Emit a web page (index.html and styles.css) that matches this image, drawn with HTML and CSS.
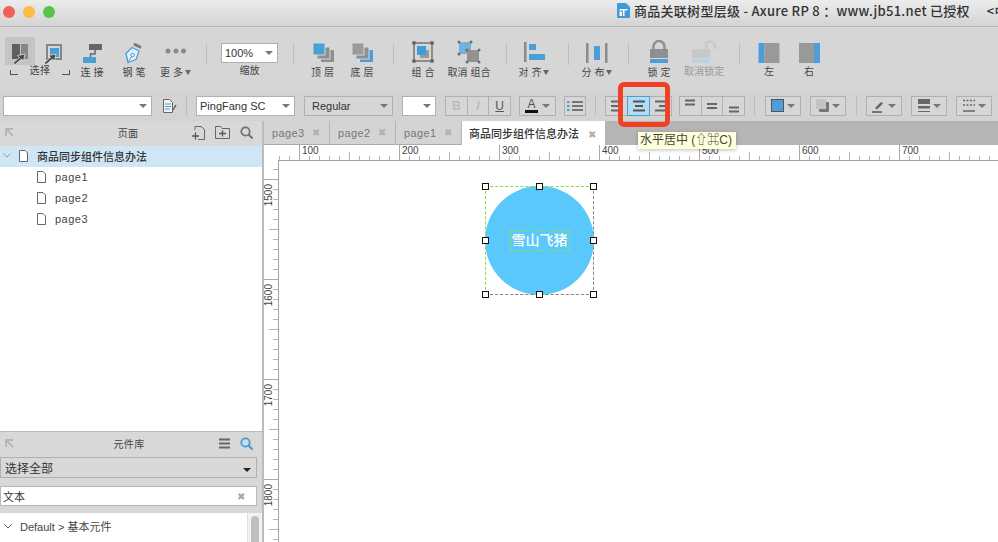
FILE: index.html
```html
<!DOCTYPE html>
<html lang="zh-CN">
<head>
    <meta charset="UTF-8">
    <title>商品关联树型层级 - Axure RP 8</title>
    <link rel="stylesheet" href="styles.css">
</head>
<body>
    <!-- 标题栏 -->
    <header class="titlebar">
        <div class="lights">
            <span class="light light-red"></span>
            <span class="light light-yellow"></span>
            <span class="light light-green"></span>
        </div>
        <div class="title">
            <svg class="title-icon" width="13" height="15" viewBox="0 0 13 15"><path d="M1 0h8l4 4v10a1 1 0 0 1-1 1H1a1 1 0 0 1-1-1V1a1 1 0 0 1 1-1z" fill="#3f9bd6"/><path d="M2.500 6h8v1.500h-3v5.500h-1.500V7.500H2.500z" fill="#fff"/><path d="M2.500 8.500h2.500v4.500H2.500z" fill="#fff"/></svg>
            <span>商品关联树型层级 - Axure RP 8 ：www.jb51.net 已授权</span>
            <span class="title-extra">&lt;中</span>
        </div>
    </header>

    <!-- 主工具栏 -->
    <div class="toolbar">
        <div class="tool-select">
            <div class="select-icons">
                <div class="icon-box active">
                    <svg width="30" height="28" viewBox="0 0 30 28"><rect x="7" y="7" width="8" height="15" fill="#5f5f5f"/><rect x="16" y="7" width="7" height="15" fill="#868686"/><path d="M20 17l-7.500 1.500 2 2L8 26l2 1.500 6.500-5.500 2 2z" fill="#4a4a4a" stroke="#eee" stroke-width=".7"/></svg>
                </div>
                <div class="icon-box">
                    <svg width="30" height="28" viewBox="0 0 30 28"><rect x="8" y="8" width="14" height="14" fill="none" stroke="#858585" stroke-width="2"/><rect x="11" y="11" width="9" height="9" fill="#4a9fd8"/><path d="M17 17l-7.500 1.500 2 2L5 26l2 1.500 6.500-5.500 2 2z" fill="#4a4a4a" stroke="#eee" stroke-width=".7"/></svg>
                </div>
            </div>
            <div class="select-label">
                <span class="corner corner-left"></span>
                <span>选择</span>
                <span class="corner corner-right"></span>
            </div>
        </div>

        <div class="tool">
            <svg width="30" height="28" viewBox="0 0 30 28"><rect x="12" y="7" width="13" height="6" fill="#666"/><path d="M18 13v4h-4.500v3" fill="none" stroke="#666" stroke-width="1.500"/><rect x="6" y="20" width="13" height="6" fill="#4a9fd8"/></svg>
            <span class="tool-label">连 接</span>
        </div>
        <div class="tool">
            <svg width="30" height="28" viewBox="0 0 30 28"><path d="M9 25.500l-2-9 6-6 7 3.500-3 8.500z" fill="#e8f2f9" stroke="#4a9fd8" stroke-width="1.300"/><circle cx="13.500" cy="18" r="1.800" fill="none" stroke="#4a9fd8"/><path d="M9 25.500l3.500-6" stroke="#4a9fd8"/><path d="M15 7l7 3.500" stroke="#777" stroke-width="3"/></svg>
            <span class="tool-label">钢 笔</span>
        </div>
        <div class="tool">
            <svg width="30" height="28" viewBox="0 0 30 28"><circle cx="7" cy="14" r="2.500" fill="#8a8a8a"/><circle cx="15" cy="14" r="2.500" fill="#8a8a8a"/><circle cx="22.500" cy="14" r="2.500" fill="#8a8a8a"/></svg>
            <span class="tool-label">更 多<i class="mini-caret"></i></span>
        </div>
        <span class="sep"></span>
        <div class="tool">
            <div class="zoom-box combo">
                <span>100%</span>
                <i class="caret"></i>
            </div>
            <span class="tool-label zoom-label">缩放</span>
        </div>
        <span class="sep"></span>
        <div class="tool">
            <svg width="30" height="28" viewBox="0 0 30 28"><rect x="13" y="13" width="13" height="12" fill="#8f8f8f"/><rect x="9" y="10" width="13" height="12" fill="#8f8f8f" stroke="#d6d6d6"/><rect x="5" y="6" width="12" height="12" fill="#4a9fd8" stroke="#d6d6d6"/></svg>
            <span class="tool-label">顶 层</span>
        </div>
        <div class="tool">
            <svg width="30" height="28" viewBox="0 0 30 28"><rect x="13" y="13" width="13" height="12" fill="#4a9fd8"/><rect x="9" y="10" width="13" height="12" fill="#8f8f8f" stroke="#d6d6d6"/><rect x="5" y="6" width="12" height="12" fill="#9a9a9a" stroke="#d6d6d6"/></svg>
            <span class="tool-label">底 层</span>
        </div>
        <span class="sep"></span>
        <div class="tool">
            <svg width="30" height="28" viewBox="0 0 30 28"><rect x="6" y="6" width="18" height="18" fill="none" stroke="#666" stroke-width="1.300"/><g fill="#666"><circle cx="6" cy="6" r="2"/><circle cx="24" cy="6" r="2"/><circle cx="6" cy="24" r="2"/><circle cx="24" cy="24" r="2"/></g><rect x="12" y="13" width="9" height="8" fill="#9a9a9a"/><rect x="9" y="9" width="9" height="9" fill="#3f9bd9"/></svg>
            <span class="tool-label">组 合</span>
        </div>
        <div class="tool">
            <svg width="30" height="28" viewBox="0 0 30 28"><rect x="5" y="5" width="12" height="12" fill="#74b2dc"/><rect x="13" y="13" width="12" height="12" fill="#929292"/><g fill="#6f6f6f"><circle cx="5" cy="5" r="1.500"/><circle cx="17" cy="5" r="1.500"/><circle cx="5" cy="17" r="1.500"/><circle cx="13" cy="13" r="1.500"/><circle cx="25" cy="13" r="1.500"/><circle cx="13" cy="25" r="1.500"/><circle cx="25" cy="25" r="1.500"/></g></svg>
            <span class="tool-label">取消 组合</span>
        </div>
        <span class="sep"></span>
        <div class="tool">
            <svg width="30" height="28" viewBox="0 0 30 28"><rect x="5" y="5" width="2.500" height="20" fill="#8a8a8a"/><rect x="10" y="7" width="7" height="6" fill="#4a9fd8"/><rect x="10" y="17" width="16" height="6" fill="#4a9fd8"/></svg>
            <span class="tool-label">对 齐<i class="mini-caret"></i></span>
        </div>
        <span class="sep"></span>
        <div class="tool">
            <svg width="30" height="28" viewBox="0 0 30 28"><rect x="4" y="6" width="2.500" height="20" fill="#8a8a8a"/><rect x="23" y="6" width="2.500" height="20" fill="#8a8a8a"/><rect x="12" y="9" width="6" height="14" fill="#4a9fd8"/></svg>
            <span class="tool-label">分 布<i class="mini-caret"></i></span>
        </div>
        <span class="sep"></span>
        <div class="tool">
            <svg width="30" height="28" viewBox="0 0 30 28"><path d="M9.500 12V9.500a5.500 5.500 0 0 1 11 0V12" fill="none" stroke="#8f8f8f" stroke-width="2.500"/><rect x="6" y="12" width="18" height="9" fill="#8f8f8f"/><rect x="6" y="22" width="18" height="4" fill="#4a9fd8"/></svg>
            <span class="tool-label">锁 定</span>
        </div>
        <div class="tool tool-off">
            <svg width="30" height="28" viewBox="0 0 30 28"><path d="M17 12V9a4.500 4.500 0 0 1 9 0v3" fill="none" stroke="#c8c8c8" stroke-width="2.500"/><rect x="3" y="12" width="18" height="9" fill="#c8c8c8"/><rect x="3" y="22" width="18" height="4" fill="#b9d3e3"/></svg>
            <span class="tool-label">取消锁定</span>
        </div>
        <span class="sep"></span>
        <div class="tool tool-side">
            <svg width="30" height="28" viewBox="0 0 30 28"><rect x="4.500" y="6" width="6" height="20" fill="#4a9fd8"/><rect x="10.500" y="6" width="15" height="20" fill="#999"/></svg>
            <span class="tool-label">左</span>
        </div>
        <div class="tool tool-side">
            <svg width="30" height="28" viewBox="0 0 30 28"><rect x="5" y="6" width="15" height="20" fill="#999"/><rect x="20" y="6" width="6" height="20" fill="#4a9fd8"/></svg>
            <span class="tool-label">右</span>
        </div>
    </div>

    <!-- 格式栏 -->
    <div class="formatbar">
        <div class="combo fmt-style"><span></span><i class="caret"></i></div>
        <svg class="fmt-doc" width="16" height="16" viewBox="0 0 16 16"><path d="M2.500 1.500h6l3 3v10h-9z" fill="#f2f2f2" stroke="#666"/><path d="M4 6h6M4 8.500h6M4 11h5" stroke="#4a9fd8"/><path d="M12 12l3-5" stroke="#555" stroke-width="1.300"/></svg>
        <span class="sep-small"></span>
        <div class="combo fmt-font"><span>PingFang SC</span><i class="caret"></i></div>
        <div class="combo combo-gray fmt-weight"><span>Regular</span><i class="caret"></i></div>
        <div class="combo fmt-size"><span></span><i class="caret"></i></div>
        <div class="btn-group fmt-biu">
            <span class="fmt-btn off bold">B</span>
            <span class="fmt-btn off ital">I</span>
            <span class="fmt-btn under">U</span>
        </div>
        <div class="fmt-drop fmt-color">
            <span class="letter-a">A</span>
            <i class="caret"></i>
        </div>
        <div class="fmt-btn single fmt-list">
            <svg width="16" height="12" viewBox="0 0 16 12"><path d="M0 2h2.500M0 6h2.500M0 10h2.500" stroke="#4a9fd8" stroke-width="2"/><path d="M5 2h11M5 6h11M5 10h11" stroke="#555" stroke-width="1.500"/></svg>
        </div>
        <span class="sep-small"></span>
        <div class="btn-group fmt-align">
            <span class="fmt-btn"><svg width="14" height="14" viewBox="0 0 14 14"><path d="M1 2.500h12M1 7h8M1 11.500h12" stroke="#666" stroke-width="1.800"/></svg></span>
            <span class="fmt-btn on"><svg width="14" height="14" viewBox="0 0 14 14"><path d="M1 2.500h12M3 7h8M1 11.500h12" stroke="#555" stroke-width="1.800"/></svg></span>
            <span class="fmt-btn"><svg width="14" height="14" viewBox="0 0 14 14"><path d="M1 2.500h12M5 7h8M1 11.500h12" stroke="#666" stroke-width="1.800"/></svg></span>
        </div>
        <div class="btn-group fmt-valign">
            <span class="fmt-btn"><svg width="14" height="16" viewBox="0 0 14 16"><path d="M2 2.500h10M2 6.500h10" stroke="#666" stroke-width="2"/></svg></span>
            <span class="fmt-btn"><svg width="14" height="16" viewBox="0 0 14 16"><path d="M2 6h10M2 10h10" stroke="#666" stroke-width="2"/></svg></span>
            <span class="fmt-btn"><svg width="14" height="16" viewBox="0 0 14 16"><path d="M2 9.500h10M2 13.500h10" stroke="#666" stroke-width="2"/></svg></span>
        </div>
        <span class="sep-small"></span>
        <div class="fmt-drop fmt-fill">
            <svg width="13" height="13" viewBox="0 0 13 13"><rect x=".5" y=".5" width="12" height="12" fill="#4a9fd8" stroke="#555"/></svg>
            <i class="caret"></i>
        </div>
        <div class="fmt-drop">
            <svg width="13" height="13" viewBox="0 0 13 13"><rect x="3" y="3" width="10" height="10" rx="1" fill="#777"/><rect x="0" y="0" width="10" height="10" fill="#c4c4c4"/></svg>
            <i class="caret"></i>
        </div>
        <span class="sep-small fmt-sep-line"></span>
        <div class="fmt-drop">
            <svg width="14" height="14" viewBox="0 0 14 14"><path d="M3 9l6-6 2 1.500-6 6z" fill="#666"/><path d="M0 13h10" stroke="#555" stroke-width="1.500"/></svg>
            <i class="caret"></i>
        </div>
        <div class="fmt-drop">
            <svg width="14" height="14" viewBox="0 0 14 14"><rect x="1" y="0" width="12" height="5" fill="#666"/><rect x="1" y="7" width="12" height="2.500" fill="#666"/><rect x="1" y="12" width="12" height="1" fill="#666"/></svg>
            <i class="caret"></i>
        </div>
        <div class="fmt-drop">
            <svg width="14" height="14" viewBox="0 0 14 14"><path d="M1 1.500h12M1 6h12" stroke="#666" stroke-width="1.500" stroke-dasharray="2 1.500"/><path d="M1 12h12" stroke="#666" stroke-width="1.500"/></svg>
            <i class="caret"></i>
        </div>
    </div>

    <div class="main">
        <!-- 左侧面板 -->
        <aside class="sidebar">
            <section class="pages">
                <div class="panel-head">
                    <svg width="9" height="9" viewBox="0 0 9 9"><path d="M1 8V1h7M1 1l7 7" fill="none" stroke="#b5b5b5" stroke-width="1.800"/></svg>
                    <span class="panel-title">页面</span>
                    <div class="panel-icons">
                        <svg width="13" height="14" viewBox="0 0 13 14"><path d="M3 4V.5h6l3.500 3v10H6" fill="none" stroke="#666"/><path d="M0 10h7M3.500 6.500v7" stroke="#555" stroke-width="1.300"/></svg>
                        <svg width="15" height="13" viewBox="0 0 15 13"><path d="M.5 2.500V.5h5l1.500 2h7.500v10H.5z" fill="none" stroke="#666"/><path d="M4 7.500h7M7.500 4.500v6" stroke="#555" stroke-width="1.300"/></svg>
                        <svg width="13" height="13" viewBox="0 0 13 13"><circle cx="5.500" cy="5.500" r="4.200" fill="none" stroke="#707070" stroke-width="1.700"/><path d="M8.500 8.500l4 4" stroke="#707070" stroke-width="2"/></svg>
                    </div>
                </div>
                <div class="tree-row selected">
                    <svg class="chevron" width="8" height="5" viewBox="0 0 8 5"><path d="M.5.500L4 4 7.500.5" fill="none" stroke="#999"/></svg>
                    <svg class="page-icon" width="9" height="12" viewBox="0 0 9 12"><path d="M.5.500h5.500l2.500 2.500v8.500h-8z" fill="#fff" stroke="#666"/></svg>
                    <span class="tree-text">商品同步组件信息办法</span>
                </div>
                <div class="tree-row child">
                    <svg class="page-icon" width="9" height="12" viewBox="0 0 9 12"><path d="M.5.500h5.500l2.500 2.500v8.500h-8z" fill="#fff" stroke="#666"/></svg>
                    <span>page1</span>
                </div>
                <div class="tree-row child">
                    <svg class="page-icon" width="9" height="12" viewBox="0 0 9 12"><path d="M.5.500h5.500l2.500 2.500v8.500h-8z" fill="#fff" stroke="#666"/></svg>
                    <span>page2</span>
                </div>
                <div class="tree-row child">
                    <svg class="page-icon" width="9" height="12" viewBox="0 0 9 12"><path d="M.5.500h5.500l2.500 2.500v8.500h-8z" fill="#fff" stroke="#666"/></svg>
                    <span>page3</span>
                </div>
            </section>

            <section class="widgets">
                <div class="panel-head">
                    <svg width="9" height="9" viewBox="0 0 9 9"><path d="M1 8V1h7M1 1l7 7" fill="none" stroke="#b5b5b5" stroke-width="1.800"/></svg>
                    <span class="panel-title">元件库</span>
                    <div class="panel-icons">
                        <svg width="11" height="11" viewBox="0 0 11 11"><path d="M0 1.500h11M0 5.500h11M0 9.500h11" stroke="#666" stroke-width="1.800"/></svg>
                        <svg width="13" height="13" viewBox="0 0 13 13"><circle cx="5.500" cy="5.500" r="4.200" fill="none" stroke="#3f9bd9" stroke-width="1.800"/><path d="M8.500 8.500l4 4" stroke="#3f9bd9" stroke-width="2.200"/></svg>
                    </div>
                </div>
                <div class="lib-select">
                    <span>选择全部</span>
                    <i class="caret caret-dark"></i>
                </div>
                <div class="lib-search">
                    <span>文本</span>
                    <span class="lib-clear">✖</span>
                </div>
                <div class="lib-list">
                    <div class="lib-row">
                        <svg width="8" height="5" viewBox="0 0 8 5"><path d="M.5.500L4 4 7.500.5" fill="none" stroke="#555"/></svg>
                        <span>Default &gt; 基本元件</span>
                    </div>
                    <div class="lib-scroll"><span class="lib-thumb"></span></div>
                </div>
            </section>
        </aside>

        <!-- 编辑区 -->
        <section class="workspace">
            <div class="tabs">
                <div class="tab"><span>page3</span><span class="tab-x">✖</span></div>
                <div class="tab"><span>page2</span><span class="tab-x">✖</span></div>
                <div class="tab"><span>page1</span><span class="tab-x">✖</span></div>
                <div class="tab tab-active"><span>商品同步组件信息办法</span><span class="tab-x">✖</span></div>
            </div>
            <div class="stage">
                <div class="ruler-corner"></div>
                <div class="ruler-top">
                    <span class="ruler-stub"></span>
                    <span class="h-cell">100</span>
                    <span class="h-cell">200</span>
                    <span class="h-cell">300</span>
                    <span class="h-cell">400</span>
                    <span class="h-cell">500</span>
                    <span class="h-cell">600</span>
                    <span class="h-cell">700</span>
                </div>
                <div class="ruler-left">
                    <span class="ruler-stub-v"></span>
                    <div class="v-cell"><span>1500</span></div>
                    <div class="v-cell"><span>1600</span></div>
                    <div class="v-cell"><span>1700</span></div>
                    <div class="v-cell"><span>1800</span></div>
                </div>
                <div class="canvas">
                    <div class="shape">
                        <div class="shape-circle">
                            <span class="shape-text">雪山飞猪</span>
                        </div>
                        <span class="handle h-tl"></span>
                        <span class="handle h-tc"></span>
                        <span class="handle h-tr"></span>
                        <span class="handle h-ml"></span>
                        <span class="handle h-mr"></span>
                        <span class="handle h-bl"></span>
                        <span class="handle h-bc"></span>
                        <span class="handle h-br"></span>
                    </div>
                </div>
            </div>
        </section>
    </div>

    <!-- 标注和提示 -->
    <div class="red-mark"></div>
    <div class="tooltip">水平居中 (⇧⌘C)</div>
</body>
</html>
```

FILE: styles.css
```css
* {
    box-sizing: border-box;
}

html, body {
    margin: 0;
    height: 542px;
    overflow: hidden;
}

body {
    position: relative;
    display: flex;
    flex-direction: column;
    font-family: "Liberation Sans", "Noto Sans CJK SC", sans-serif;
    font-size: 11px;
    color: #333;
    background: #d6d6d6;
}

/* 标题栏 */
.titlebar {
    height: 27px;
    flex: none;
    display: flex;
    align-items: center;
    background: linear-gradient(#ececec, #d4d4d4);
    border-bottom: 1px solid #b4b4b4;
    overflow: hidden;
}

.lights {
    display: flex;
    gap: 8px;
    padding-left: 3px;
    margin-top: -2px;
}

.light {
    width: 12px;
    height: 12px;
    border-radius: 50%;
}

.light-red { background: #f15f57; }
.light-yellow { background: #fbbc41; }
.light-green { background: #5ac34c; }

.title {
    display: flex;
    align-items: center;
    margin-left: 562px;
    font-family: "Noto Sans CJK SC", sans-serif;
    font-size: 13px;
    font-weight: 500;
    line-height: 16px;
    letter-spacing: 0.28px;
    color: #333;
    white-space: nowrap;
    margin-top: -5px;
}

.title-icon {
    margin-right: 4px;
}

.title-extra {
    margin-left: 17px;
}

/* 主工具栏 */
.toolbar {
    height: 63px;
    flex: none;
    display: grid;
    grid-template-columns: 66px 42px 42px 41px 20px 67px 20px 39px 40px 22px 38px 54px 20px 36px 32px 26px 36px 26px 64px 6px 54px 26px;
    padding: 10px 0 0 5px;
    background: #d6d6d6;
}

.tool {
    display: flex;
    flex-direction: column;
    align-items: center;
    min-width: 0;
}

.tool svg {
    display: block;
    flex: none;
}

.tool-label {
    font-size: 10px;
    line-height: 14px;
    color: #444;
    white-space: nowrap;
    margin-top: 1px;
}

.tool-off .tool-label,
.tool-side .tool-label {
    margin-top: 0;
}

.tool-off .tool-label {
    color: #999;
}

.mini-caret {
    display: inline-block;
    margin-left: 2px;
    vertical-align: 1px;
    border-left: 3px solid transparent;
    border-right: 3px solid transparent;
    border-top: 5px solid #666;
}

.tool-select {
    display: flex;
    flex-direction: column;
}

.select-icons {
    display: flex;
    gap: 4px;
}

.icon-box {
    width: 30px;
    height: 28px;
}

.icon-box.active {
    background: #c4c4c4;
}

.icon-box svg {
    display: block;
}

.select-label {
    display: flex;
    justify-content: space-between;
    align-items: center;
    width: 60px;
    margin-left: 5px;
    font-size: 10px;
    line-height: 14px;
    color: #444;
    letter-spacing: 0.5px;
    margin-top: -1px;
}

.corner {
    width: 8px;
    height: 5px;
    border-bottom: 1px solid #555;
    margin-top: 2px;
}

.corner-left { border-left: 1px solid #555; }
.corner-right { border-right: 1px solid #555; }

.sep {
    justify-self: center;
    width: 1px;
    height: 21px;
    margin-top: 7px;
    background: #bdbdbd;
}

.zoom-box {
    width: 57px;
    height: 21px;
    margin-top: 6px;
    margin-bottom: 1px;
    font-size: 14px;
    padding: 0 5px 0 3px;
}

.zoom-label {
    margin-top: 0;
}

/* 下拉框 */
.combo {
    display: flex;
    align-items: center;
    justify-content: space-between;
    flex: none;
    height: 20px;
    padding: 0 4px 0 3px;
    background: #fff;
    border: 1px solid #b0b0b0;
    color: #333;
    font-size: 11px;
}

.combo-gray {
    background: #d6d6d6;
    padding-left: 7px;
}

.caret {
    flex: none;
    border-left: 4px solid transparent;
    border-right: 4px solid transparent;
    border-top: 4px solid #777;
}

.caret-dark {
    border-top-color: #222;
    margin-top: 4px;
}

/* 格式栏 */
.formatbar {
    height: 31px;
    flex: none;
    display: flex;
    align-items: center;
    gap: 9px;
    padding-left: 3px;
    background: #d3d3d3;
}

.fmt-style { width: 149px; }
.fmt-font { width: 99px; }
.fmt-weight { width: 89px; }
.fmt-size { width: 34px; }
.fmt-doc { flex: none; }

.sep-small {
    width: 1px;
    height: 20px;
    flex: none;
    background: #bdbdbd;
}

.btn-group {
    display: flex;
    flex: none;
    height: 20px;
}

.fmt-biu { width: 66px; }
.fmt-align { width: 67px; }
.fmt-valign { width: 66px; margin-left: -2px; }

.fmt-btn {
    flex: 1;
    display: flex;
    align-items: center;
    justify-content: center;
    height: 20px;
    margin-left: -1px;
    border: 1px solid #b0b0b0;
    background: #d6d6d6;
    color: #555;
    font-size: 12px;
}

.fmt-btn:first-child {
    margin-left: 0;
}

.fmt-btn.off {
    color: #bbb;
    font-weight: bold;
}

.fmt-btn.ital {
    font-style: italic;
}

.fmt-btn.under {
    text-decoration: underline;
}

.fmt-btn.on {
    position: relative;
    background: #b3dcf2;
    border-color: #4a9fd8;
}

.fmt-btn.single {
    flex: none;
    width: 22px;
}

.fmt-btn.fmt-list {
    margin-left: -1px;
}

.fmt-drop {
    display: flex;
    align-items: center;
    justify-content: space-between;
    flex: none;
    width: 36px;
    height: 20px;
    padding: 0 5px 0 5px;
    border: 1px solid #b0b0b0;
    background: #d6d6d6;
}

.fmt-color {
    width: 37px;
    margin-left: -1px;
}

.letter-a {
    width: 13px;
    height: 15px;
    text-align: center;
    line-height: 12px;
    font-size: 12px;
    color: #555;
    border-bottom: 3px solid #111;
}

.fmt-fill { margin-left: 1px; }
.fmt-sep-line { margin-left: 1px; }

/* 主区域 */
.main {
    flex: 1;
    display: flex;
    min-height: 0;
}

.sidebar {
    width: 264px;
    flex: none;
    display: flex;
    flex-direction: column;
    background: #fff;
    border-right: 2px solid #bcbcbc;
}

.pages {
    height: 310px;
    flex: none;
}

.widgets {
    flex: 1;
    display: flex;
    flex-direction: column;
    border-top: 1px solid #bdbdbd;
    background: #d8d8d8;
    min-height: 0;
}

.panel-head {
    display: grid;
    grid-template-columns: 1fr auto 1fr;
    align-items: center;
    height: 25px;
    padding: 0 9px 2px 5px;
    background: #d8d8d8;
    color: #444;
    font-size: 10px;
}

.pages .panel-title {
    margin-right: 2px;
}

.panel-title {
    letter-spacing: 0.3px;
}

.panel-icons {
    display: flex;
    justify-content: flex-end;
    align-items: center;
    gap: 10px;
}

.tree-row {
    display: flex;
    align-items: center;
    height: 21px;
    padding-bottom: 2px;
    font-size: 11px;
    letter-spacing: 0.5px;
    color: #444;
}

.tree-row.selected {
    background: #cfe7f4;
    padding-left: 3px;
}

.tree-row.child {
    padding-left: 37px;
}

.chevron {
    margin-right: 8px;
}

.page-icon {
    margin-right: 9px;
    flex: none;
}

.tree-text {
    font-family: "Noto Sans CJK SC", sans-serif;
    font-weight: 500;
    font-size: 11px;
    line-height: 14px;
    letter-spacing: 0;
    color: #333;
}

.lib-select {
    display: flex;
    justify-content: space-between;
    align-items: center;
    height: 21px;
    width: 257px;
    padding: 0 5px 0 4px;
    border: 1px solid #b0b0b0;
    font-size: 12px;
    color: #333;
    flex: none;
}

.lib-search {
    display: flex;
    justify-content: space-between;
    align-items: center;
    flex: none;
    width: 257px;
    height: 20px;
    margin-top: 8px;
    padding: 0 11px 0 2px;
    background: #fff;
    border: 1px solid #b8b8b8;
    font-size: 11px;
    color: #333;
}

.lib-clear {
    font-size: 10px;
    color: #aaa;
}

.lib-list {
    flex: 1;
    display: flex;
    justify-content: space-between;
    margin-top: 7px;
    background: #fff;
    overflow: hidden;
}

.lib-row {
    display: flex;
    align-items: center;
    gap: 8px;
    height: 26px;
    padding-left: 4px;
    font-size: 11px;
    color: #444;
}

.lib-scroll {
    width: 15px;
    background: #f2f2f2;
    border-left: 1px solid #e0e0e0;
    padding: 3px 3px 0 3px;
}

.lib-thumb {
    display: block;
    width: 8px;
    height: 60px;
    border-radius: 4px;
    background: #c0c0c0;
}

/* 编辑区 */
.workspace {
    flex: 1;
    display: flex;
    flex-direction: column;
    min-width: 0;
    background: #fff;
}

.tabs {
    display: flex;
    height: 24px;
    flex: none;
    background: #b5b5b5;
}

.tab {
    display: flex;
    align-items: center;
    justify-content: space-between;
    width: 65px;
    margin-right: 1px;
    padding: 0 9px 0 8px;
    background: #d4d4d4;
    color: #777;
    font-size: 11px;
    letter-spacing: 0.4px;
    border-bottom: 1px solid #aaa;
}

.tab-x {
    font-size: 10px;
    color: #b0b0b0;
}

.tab-active {
    width: 143px;
    padding: 0 9px 0 7px;
    background: #fff;
    color: #333;
    font-family: "Noto Sans CJK SC", sans-serif;
    font-weight: 500;
    letter-spacing: 0;
    border-bottom: none;
}

.stage {
    flex: 1;
    display: grid;
    grid-template-columns: 14px 1fr;
    grid-template-rows: 15px 1fr;
    min-height: 0;
}

.ruler-top {
    display: flex;
    overflow: hidden;
    background-color: #fff;
    background-image:
        repeating-linear-gradient(90deg, #b4b4b4 0 1px, transparent 1px 10px),
        repeating-linear-gradient(90deg, #b4b4b4 0 1px, transparent 1px 100px);
    background-size: 100% 4px, 100% 8px;
    background-position: 1px bottom, 71px bottom;
    background-repeat: no-repeat;
}

.ruler-stub {
    width: 21px;
    flex: none;
}

.h-cell {
    width: 100px;
    flex: none;
    padding-left: 2px;
    border-left: 1px solid #aaa;
    font-size: 10px;
    line-height: 11px;
    color: #444;
}

.ruler-left {
    overflow: hidden;
    background-color: #fff;
    background-image:
        repeating-linear-gradient(#b4b4b4 0 1px, transparent 1px 10px),
        repeating-linear-gradient(#b4b4b4 0 1px, transparent 1px 100px);
    background-size: 5px 100%, 9px 100%;
    background-position: right 9px, right 69px;
    background-repeat: no-repeat;
}

.ruler-stub-v {
    display: block;
    height: 19px;
}

.v-cell {
    height: 100px;
    border-top: 1px solid #aaa;
    padding-top: 4px;
}

.v-cell span {
    display: block;
    writing-mode: vertical-rl;
    transform: rotate(180deg);
    font-size: 10px;
    line-height: 10px;
    color: #444;
}

.canvas {
    position: relative;
    background: #fff;
    border-left: 1px solid #a0a0a0;
    border-top: 1px solid #a0a0a0;
}

/* 画布上的圆形元件 */
.shape {
    position: absolute;
    left: 206px;
    top: 25px;
    width: 109px;
    height: 109px;
}

.shape::before,
.shape::after {
    content: "";
    position: absolute;
    inset: 0;
    z-index: 1;
}

.shape::before {
    border: 1px dashed #7fe03a;
}

.shape::after {
    border-right: 1px dashed #888;
    border-bottom: 1px dashed #888;
}

.shape-circle {
    display: flex;
    align-items: center;
    justify-content: center;
    width: 109px;
    height: 109px;
    border-radius: 50%;
    background: #5ac8fa;
}

.shape-text {
    height: 21px;
    padding: 0 1px;
    border: 1px dashed #8fe34a;
    color: #fff;
    font-family: "Noto Sans CJK SC", sans-serif;
    font-size: 14px;
    font-weight: 500;
    line-height: 17px;
}

.handle {
    position: absolute;
    z-index: 2;
    width: 7px;
    height: 7px;
    background: #fff;
    border: 1px solid #111;
}

.h-tl { left: -3px; top: -3px; }
.h-tc { left: 51px; top: -3px; }
.h-tr { right: -3px; top: -3px; }
.h-ml { left: -3px; top: 51px; }
.h-mr { right: -3px; top: 51px; }
.h-bl { left: -3px; bottom: -3px; }
.h-bc { left: 51px; bottom: -3px; }
.h-br { right: -3px; bottom: -3px; }

/* 标注和提示 */
.red-mark {
    position: absolute;
    left: 618px;
    top: 82px;
    width: 52px;
    height: 45px;
    border: 5px solid #f04124;
    border-radius: 6px;
}

.tooltip {
    position: absolute;
    left: 638px;
    top: 132px;
    width: 98px;
    height: 17px;
    padding-left: 2px;
    background: #ffffdc;
    box-shadow: 0 1px 4px rgba(0, 0, 0, 0.25);
    font-size: 12px;
    line-height: 17px;
    color: #444;
    white-space: nowrap;
}
```
